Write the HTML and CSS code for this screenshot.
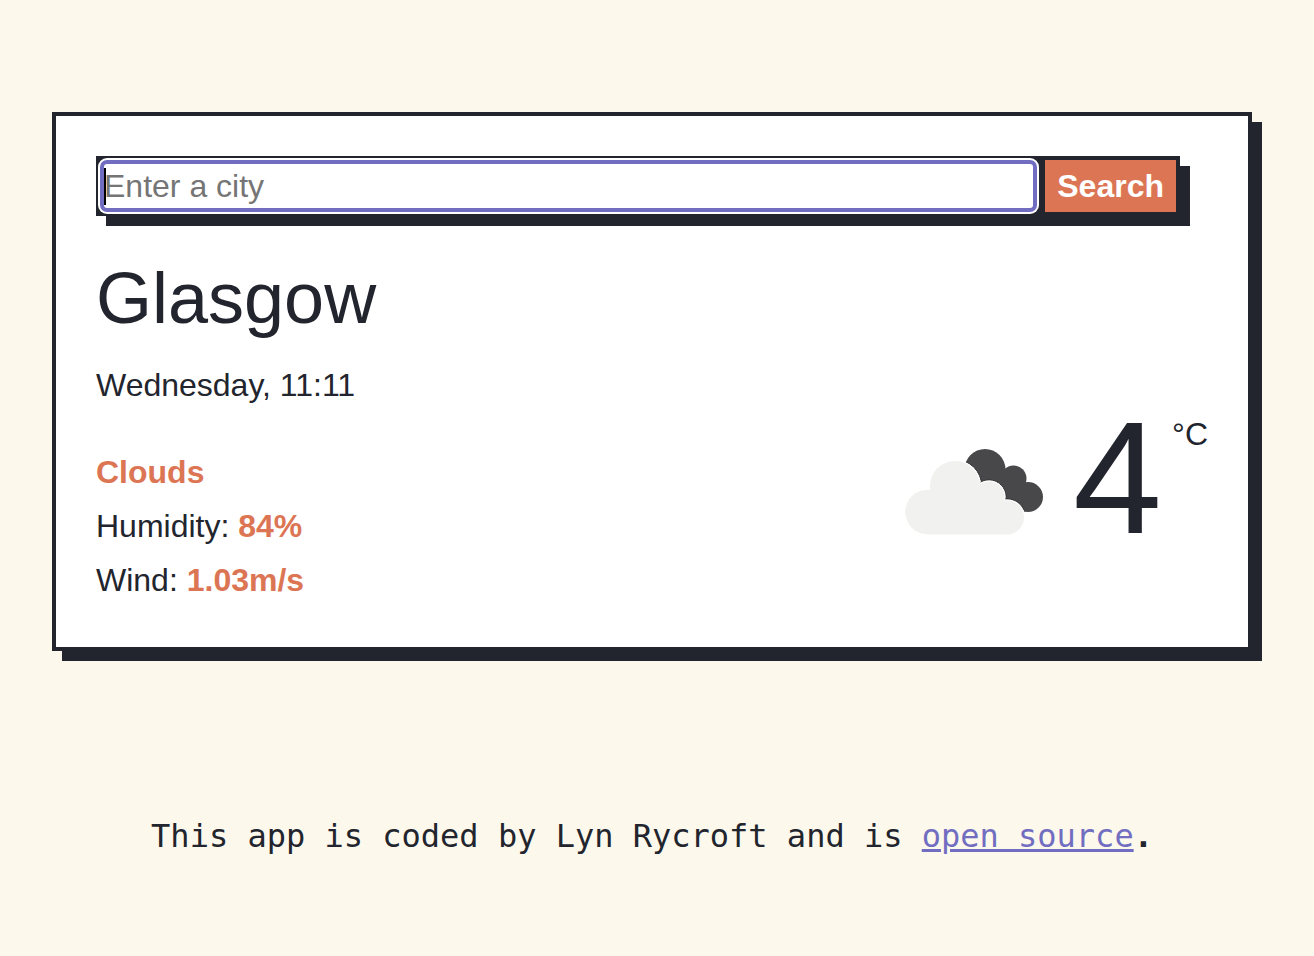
FILE: index.html
```html
<!DOCTYPE html>
<html lang="en">
<head>
  <meta charset="utf-8">
  <meta name="viewport" content="width=device-width, initial-scale=1">
  <title>Weather app</title>
  <link rel="stylesheet" href="styles.css">
</head>
<body>
  <main class="card">
    <form class="search">
      <input class="search-input" type="search" placeholder="Enter a city" aria-label="City">
      <button class="search-button" type="submit">Search</button>
    </form>
    <h1 class="city">Glasgow</h1>
    <div class="weather">
      <div class="details">
        <p class="time">Wednesday, 11:11</p>
        <p class="accent">Clouds</p>
        <p>Humidity: <strong class="accent">84%</strong></p>
        <p>Wind: <strong class="accent">1.03m/s</strong></p>
      </div>
      <div class="temperature">
        <svg class="icon" viewBox="25 48 140 88" role="img" aria-label="Broken clouds">
          <g fill="#48484a">
            <circle cx="105" cy="69.5" r="20.5"/>
            <circle cx="133.5" cy="78.5" r="13"/>
            <circle cx="148" cy="97" r="15"/>
            <path d="M105 69h20l21 14 2 28-20-2-30-24z"/>
          </g>
          <g fill="#fff" stroke="#2f2f31" stroke-width="1" clip-path="url(#dark)">
            <circle cx="75" cy="86" r="26.5"/>
            <circle cx="109" cy="97" r="17"/>
            <circle cx="127" cy="117.5" r="18.5"/>
          </g>
          <g fill="#fff">
            <circle cx="75" cy="86" r="26"/>
            <circle cx="109" cy="97" r="16.5"/>
            <circle cx="127" cy="117.5" r="18"/>
          </g>
          <g fill="#f1f1ef">
            <circle cx="47.5" cy="112" r="22.3"/>
            <circle cx="75" cy="86" r="25"/>
            <circle cx="109" cy="97" r="15.5"/>
            <circle cx="127" cy="117.5" r="17"/>
            <path d="M47 134.4h80v-17l-18-20-34-12-28 27z"/>
          </g>
          <clipPath id="dark">
            <circle cx="105" cy="69.5" r="20.5"/>
            <circle cx="133.5" cy="78.5" r="13"/>
            <circle cx="148" cy="97" r="15"/>
            <path d="M105 69h20l21 14 2 28-20-2-30-24z"/>
          </clipPath>
        </svg>
        <span class="degrees">4</span>
        <span class="unit">°C</span>
      </div>
    </div>
  </main>
  <footer class="footer">This app is coded by Lyn Rycroft and is <a class="link" href="#">open source</a><b>.</b></footer>
</body>
</html>
```
FILE: styles.css
```css
* {
  box-sizing: border-box;
}

body {
  margin: 0;
  padding: 112px 62px 92px 52px;
  background: #fdf8ec;
  color: #22252d;
  font: 32px/54px "Liberation Sans", Arial, sans-serif;
}

p,
h1 {
  margin: 0;
}

.card {
  padding: 40px;
  border: 4px solid #22252d;
  background: #fff;
  box-shadow: 10px 10px 0 #22252d;
}

.search {
  position: relative;
  display: flex;
  gap: 8px;
  margin-right: 28px;
  border: 4px solid #22252d;
  background: #22252d;
  box-shadow: 10px 10px 0 #22252d;
}

/* text caret */
.search::after {
  content: "";
  position: absolute;
  top: 8px;
  left: 4px;
  width: 2px;
  height: 37px;
  background: #000;
}

.search-input {
  flex: 1;
  min-width: 0;
  height: 52px;
  padding: 0;
  border: 4px solid #716dc1;
  border-radius: 7px;
  outline: none;
  background: #fff;
  box-shadow: 0 0 0 2px #fff;
  color: inherit;
  font: inherit;
  appearance: none;
}

.search-input::placeholder {
  color: #757575;
}

.search-button {
  padding: 0 12px;
  border: 0;
  background: #dc7554;
  color: #fff;
  font: bold 32px/52px "Liberation Sans", Arial, sans-serif;
}

.city {
  margin: 40px 0 18px;
  font-size: 72px;
  font-weight: 400;
  line-height: 84px;
}

.weather {
  display: flex;
  justify-content: space-between;
}

.time {
  margin-bottom: 33px;
}

.accent {
  color: #dc7554;
  font-weight: 700;
}

.temperature {
  display: flex;
  align-items: flex-start;
  padding-top: 40px;
}

.icon {
  width: 140px;
  height: 88px;
  margin: 50px 28px 0 0;
}

.degrees {
  font-size: 160px;
  line-height: 160px;
}

.unit {
  padding: 18px 0 0 10px;
  line-height: 36px;
}

.footer {
  margin-top: 158px;
  font-family: "DejaVu Sans Mono", monospace;
  text-align: center;
}

.link {
  color: #716dc1;
}
```
